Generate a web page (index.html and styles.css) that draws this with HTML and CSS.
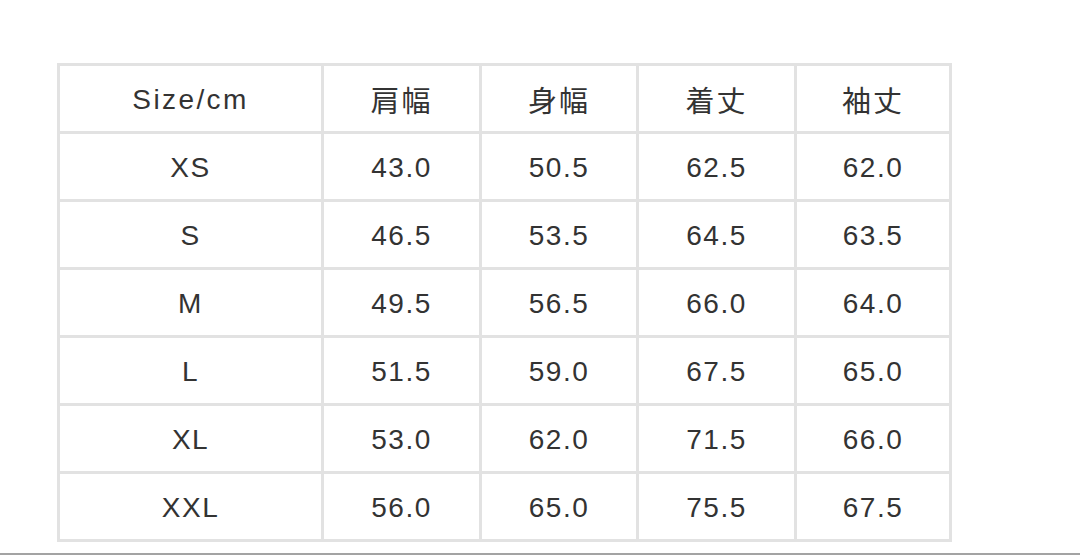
FILE: index.html
```html
<!DOCTYPE html>
<html lang="ja">
<head>
<meta charset="utf-8">
<link rel="stylesheet" href="styles.css">
</head>
<body>
<div class="page">
  <table class="size-table">
    <colgroup>
      <col class="c-size"><col class="c-a"><col class="c-b"><col class="c-a"><col class="c-c">
    </colgroup>
    <thead>
      <tr><th class="latin">Size/cm</th><th>肩幅</th><th>身幅</th><th>着丈</th><th>袖丈</th></tr>
    </thead>
    <tbody>
      <tr><td>XS</td><td>43.0</td><td>50.5</td><td>62.5</td><td>62.0</td></tr>
      <tr><td>S</td><td>46.5</td><td>53.5</td><td>64.5</td><td>63.5</td></tr>
      <tr><td>M</td><td>49.5</td><td>56.5</td><td>66.0</td><td>64.0</td></tr>
      <tr><td>L</td><td>51.5</td><td>59.0</td><td>67.5</td><td>65.0</td></tr>
      <tr><td>XL</td><td>53.0</td><td>62.0</td><td>71.5</td><td>66.0</td></tr>
      <tr><td>XXL</td><td>56.0</td><td>65.0</td><td>75.5</td><td>67.5</td></tr>
    </tbody>
  </table>
</div>
<div class="rule"></div>
</body>
</html>
```
FILE: styles.css
```css
html, body {
  margin: 0;
  padding: 0;
  background: #ffffff;
}
body {
  width: 1080px;
  height: 555px;
  overflow: hidden;
  font-family: "Liberation Sans", "Noto Sans CJK JP", sans-serif;
  color: #333333;
}
.page {
  padding: 63px 0 0 57px;
  height: 490px;
}
.size-table {
  border-collapse: collapse;
  table-layout: fixed;
  width: 892px;
}
.c-size { width: 264px; }
.c-a { width: 158px; }
.c-b { width: 157px; }
.c-c { width: 155px; }
.size-table th,
.size-table td {
  border: 3px solid #e2e2e2;
  height: 62px;
  padding: 3px 0 0 0;
  text-align: center;
  vertical-align: middle;
  font-size: 28px;
  font-weight: 400;
  line-height: 1;
  letter-spacing: 1.5px;
}
.size-table th {
  height: 64px;
  padding-top: 1px;
  font-family: "Noto Sans CJK JP", sans-serif;
  font-size: 29px;
  letter-spacing: 2px;
}
.size-table th.latin {
  font-family: "Liberation Sans", sans-serif;
  font-size: 28px;
  letter-spacing: 2.4px;
  height: 62px;
  padding-top: 3px;
}
.rule {
  height: 2px;
  background: #a3a3a3;
}
```
